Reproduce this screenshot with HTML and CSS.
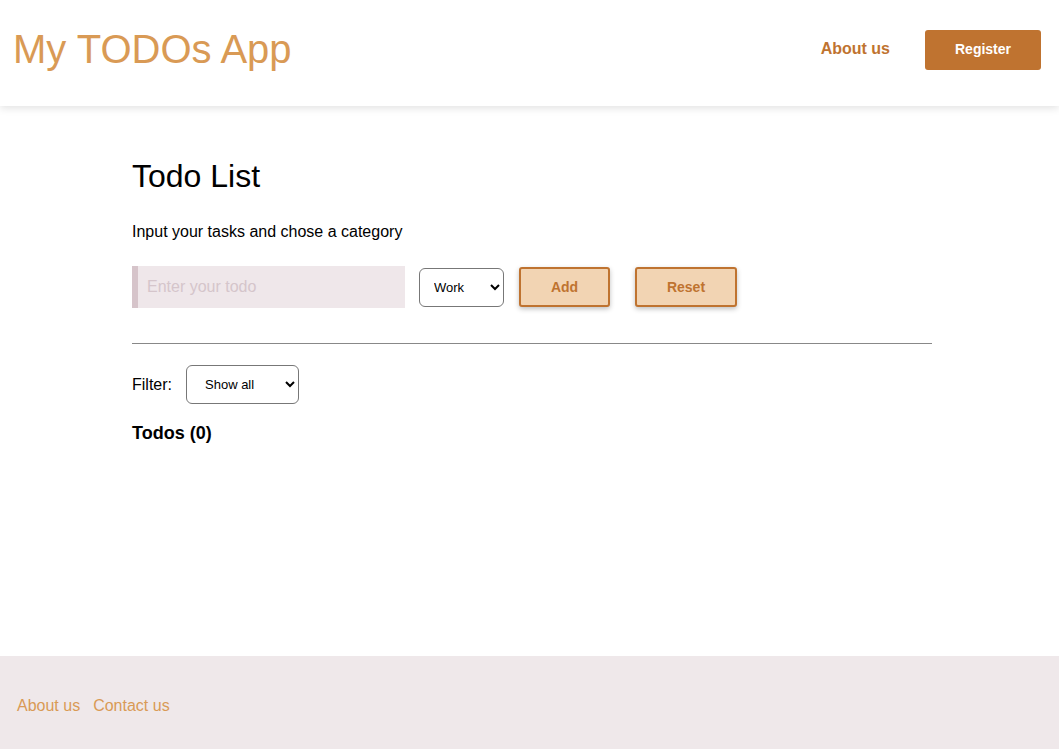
FILE: index.html
```html
<!DOCTYPE html>
<html lang="en">
<head>
<meta charset="utf-8">
<title>My TODOs App</title>
<link rel="stylesheet" href="styles.css">
</head>
<body>
<div class="page">
  <header class="header">
    <h1 class="brand">My TODOs App</h1>
    <nav class="nav">
      <a class="nav-link" href="#">About us</a>
      <button class="btn-register" type="button">Register</button>
    </nav>
  </header>
  <main class="main">
    <div class="container">
      <h2 class="title">Todo List</h2>
      <p class="intro">Input your tasks and chose a category</p>
      <form class="todo-form">
        <input class="todo-input" type="text" placeholder="Enter your todo">
        <select class="select select-cat">
          <option>Work</option>
          <option>Personal</option>
        </select>
        <button class="btn btn-add" type="button">Add</button>
        <button class="btn btn-reset" type="button">Reset</button>
      </form>
      <hr class="divider">
      <div class="filter">
        <label class="filter-label">Filter:</label>
        <select class="select select-filter">
          <option>Show all</option>
        </select>
      </div>
      <h3 class="count">Todos (0)</h3>
    </div>
  </main>
  <footer class="footer">
    <a class="footer-link" href="#">About us</a>
    <a class="footer-link" href="#">Contact us</a>
  </footer>
</div>
</body>
</html>
```
FILE: styles.css
```css
* { box-sizing: border-box; }
html, body { margin: 0; padding: 0; }
body {
  font-family: "Liberation Sans", Arial, Helvetica, sans-serif;
  color: #000;
  background: #fff;
}
.page {
  min-height: 749px;
  display: flex;
  flex-direction: column;
}
.header {
  height: 106px;
  display: flex;
  align-items: center;
  justify-content: space-between;
  padding: 0 18px 8px 13px;
  box-shadow: 0 2px 8px rgba(0,0,0,0.12);
  position: relative;
  z-index: 1;
}
.brand {
  margin: 0;
  font-size: 40px;
  font-weight: 400;
  line-height: 46px;
  color: #d99a55;
}
.nav {
  display: flex;
  align-items: center;
  gap: 35px;
  padding-top: 2px;
}
.nav-link {
  color: #bf7330;
  font-weight: 700;
  font-size: 16px;
  text-decoration: none;
  padding-bottom: 2px;
}
.btn-register {
  width: 116px;
  height: 40px;
  background: #bf7330;
  color: #fff;
  border: none;
  border-radius: 3px;
  font-family: inherit;
  font-weight: 700;
  font-size: 14px;
  padding: 0 0 2px;
}
.main {
  flex: 1;
  padding-left: 132px;
}
.container {
  width: 800px;
  padding-top: 52px;
}
.title {
  margin: 0;
  font-size: 32px;
  font-weight: 400;
  line-height: 36px;
}
.intro {
  margin: 29px 0 0;
  font-size: 16px;
  line-height: 18px;
}
.todo-form {
  display: flex;
  align-items: center;
  margin-top: 25px;
}
.todo-input {
  width: 273px;
  height: 42px;
  border: none;
  border-left: 6px solid #d6c4ca;
  background: #efe7ea;
  padding: 0 10px 0 9px;
  font-family: inherit;
  font-size: 16px;
  outline: none;
}
.todo-input::placeholder { color: #d5c5cb; }
.select {
  height: 39px;
  border: 1px solid #777;
  border-radius: 6px;
  background: #fff;
  font-family: inherit;
  font-size: 13px;
  color: #000;
  padding: 0 4px 0 10px;
}
.select-cat {
  width: 85px;
  margin-left: 14px;
}
.btn {
  height: 40px;
  background: #f2d4b3;
  border: 2px solid #bf7330;
  border-radius: 3px;
  color: #bf7330;
  font-family: inherit;
  font-weight: 700;
  font-size: 14px;
  box-shadow: 0 2px 5px rgba(0,0,0,0.25);
}
.btn-add { width: 91px; margin-left: 15px; }
.btn-reset { width: 102px; margin-left: 25px; }
.divider {
  margin: 35px 0 0;
  border: none;
  border-top: 1px solid #888;
  height: 0;
}
.filter {
  display: flex;
  align-items: center;
  gap: 14px;
  margin-top: 21px;
}
.filter-label { font-size: 16px; }
.select-filter { width: 113px; padding-left: 14px; }
.count {
  margin: 19px 0 0;
  font-size: 18px;
  font-weight: 700;
}
.footer {
  height: 93px;
  background: #efe8ea;
  display: flex;
  align-items: center;
  gap: 13px;
  padding: 7px 0 0 17px;
}
.footer-link {
  color: #d99a55;
  font-size: 16px;
  text-decoration: none;
}
```
